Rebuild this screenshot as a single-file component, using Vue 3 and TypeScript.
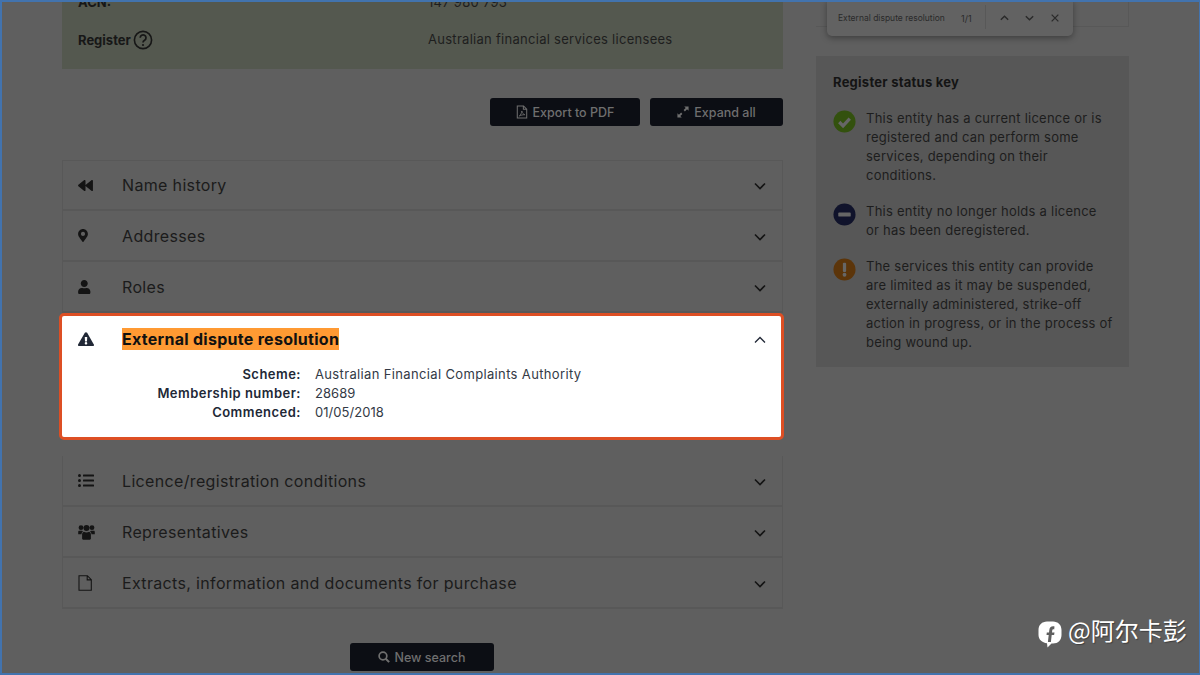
<script setup lang="ts">
interface Row { title: string; icon: string; vb: string; cls: string; line?: boolean }
const P = {
  back: 'M11.5 280.6l192 160c20.6 17.2 52.5 2.8 52.5-24.6V96c0-27.4-31.9-41.8-52.5-24.6l-192 160c-15.3 12.8-15.3 36.4 0 49.2zm256 0l192 160c20.6 17.2 52.5 2.8 52.5-24.6V96c0-27.4-31.9-41.8-52.5-24.6l-192 160c-15.3 12.8-15.3 36.4 0 49.2z',
  pin: 'M172.268 501.67C26.97 291.031 0 268.413 0 192 0 85.961 85.961 0 192 0s192 85.961 192 192c0 76.413-26.97 99.031-172.268 309.67-9.535 13.774-29.93 13.773-39.464 0zM192 272c44.183 0 80-35.817 80-80s-35.817-80-80-80-80 35.817-80 80 35.817 80 80 80z',
  user: 'M224 256c70.7 0 128-57.3 128-128S294.7 0 224 0 96 57.3 96 128s57.3 128 128 128zm89.6 32h-16.7c-22.2 10.2-46.9 16-72.9 16s-50.6-5.8-72.9-16h-16.7C60.2 288 0 348.2 0 422.4V464c0 26.5 21.5 48 48 48h352c26.5 0 48-21.5 48-48v-41.6c0-74.2-60.2-134.4-134.4-134.4z',
  warn: 'M569.517 440.013C587.975 472.007 564.806 512 527.94 512H48.054c-36.937 0-59.999-40.055-41.577-71.987L246.423 24.035c18.467-32.009 64.72-31.951 83.154 0l239.94 416.966zM288 354c-25.405 0-46 20.595-46 46s20.595 46 46 46 46-20.595 46-46-20.595-46-46-46zm-43.673-165.346l7.418 136c.347 6.364 5.609 11.346 11.982 11.346h48.546c6.373 0 11.635-4.982 11.982-11.346l7.418-136c.375-6.874-5.098-12.654-11.982-12.654h-63.383c-6.884 0-12.356 5.78-11.981 12.654z',
  list: 'M48 48a48 48 0 1 0 48 48 48 48 0 0 0-48-48zm0 160a48 48 0 1 0 48 48 48 48 0 0 0-48-48zm0 160a48 48 0 1 0 48 48 48 48 0 0 0-48-48zm448 16H176a16 16 0 0 0-16 16v32a16 16 0 0 0 16 16h320a16 16 0 0 0 16-16v-32a16 16 0 0 0-16-16zm0-320H176a16 16 0 0 0-16 16v32a16 16 0 0 0 16 16h320a16 16 0 0 0 16-16V80a16 16 0 0 0-16-16zm0 160H176a16 16 0 0 0-16 16v32a16 16 0 0 0 16 16h320a16 16 0 0 0 16-16v-32a16 16 0 0 0-16-16z',
  users: 'M3 1.300a2.400 2.400 0 1 0 0 4.800 2.400 2.400 0 0 0 0-4.800zM14 1.300a2.400 2.400 0 1 0 0 4.800 2.400 2.400 0 0 0 0-4.800zM8.500 1a3 3 0 1 0 0 6 3 3 0 0 0 0-6zM1.300 6.800h2.600c.5 0 .9.200 1.200.5C4.200 7.900 3.600 9 3.500 10.300H0.200V8c0-.7.500-1.200 1.100-1.200zM13.100 6.800h2.600c.6 0 1.100.5 1.100 1.200v2.300h-3.300c-.1-1.300-.7-2.400-1.600-3 .3-.3.700-.5 1.200-.5zM5.800 7.800c.8.500 1.700.7 2.700.7s1.900-.2 2.700-.7c1 .4 1.700 1.400 1.700 2.600v4.200c0 .6-.5 1.100-1.100 1.100H5.200c-.6 0-1.100-.5-1.100-1.100v-4.200c0-1.200.7-2.200 1.700-2.600z',
  file: 'M1 .700h8.400l3.900 4v10.600H1zM9.200 .900v4h3.900',
}
const before: Row[] = [
  { title: 'Name history', icon: P.back, vb: '0 32 512 448', cls: 'i-back' },
  { title: 'Addresses', icon: P.pin, vb: '0 0 384 512', cls: 'i-pin' },
  { title: 'Roles', icon: P.user, vb: '0 0 448 512', cls: 'i-user' },
]
const after: Row[] = [
  { title: 'Licence/registration conditions', icon: P.list, vb: '0 48 512 416', cls: 'i-list' },
  { title: 'Representatives', icon: P.users, vb: '0 0 17 16', cls: 'i-users' },
  { title: 'Extracts, information and documents for purchase', icon: P.file, vb: '0 0 14 16', cls: 'i-file', line: true },
]
const details = [
  { label: 'Scheme:', value: 'Australian Financial Complaints Authority', num: false },
  { label: 'Membership number:', value: '28689', num: true },
  { label: 'Commenced:', value: '01/05/2018', num: true },
]
const key = [
  { kind: 'ok', text: ['This entity has a current licence or is', 'registered and can perform some', 'services, depending on their', 'conditions.'] },
  { kind: 'no', text: ['This entity no longer holds a licence', 'or has been deregistered.'] },
  { kind: 'warn', text: ['The services this entity can provide', 'are limited as it may be suspended,', 'externally administered, strike-off', 'action in progress, or in the process of', 'being wound up.'] },
]
</script>

<template>
  <div class="page">
    <main class="left">
      <section class="card">
        <div class="card-row clipped"><b>ACN:</b><span>147 980 793</span></div>
        <div class="card-row">
          <b class="reg">Register
            <svg class="help" viewBox="0 0 20 20"><circle cx="10" cy="10" r="8.600" fill="none" stroke="#161616" stroke-width="1.600"/><path d="M7.200 7.800a2.900 2.900 0 1 1 4.400 2.500c-1 .6-1.600 1.200-1.600 2.300" fill="none" stroke="#161616" stroke-width="1.700"/><circle cx="10" cy="15" r="1.100" fill="#161616"/></svg>
          </b>
          <span class="reg-val">Australian financial services licensees</span>
        </div>
      </section>

      <div class="tools">
        <button class="btn export">
          <svg viewBox="0 0 14 16" class="bi"><path d="M1.500 1h7.300l3.700 3.700v10.300h-11zM8.600 1.200v3.700h3.700" fill="none" stroke="#6f6f6f" stroke-width="1.200"/><path d="M3.800 12.800c1.600-1.400 2.800-3.600 3-6 .5 2.400 1.700 3.800 3.500 4.400-2.300-.1-4.600.4-6.500 1.600z" fill="none" stroke="#6f6f6f" stroke-width="1"/></svg>
          Export to PDF
        </button>
        <button class="btn expand">
          <svg viewBox="0 0 14 14" class="bi wide"><path d="M8.400 .500h5.100v5.100l-1.800-1.800-2.500 2.500-1.500-1.500 2.500-2.500zM5.600 13.500H.500V8.400l1.800 1.800 2.500-2.500 1.500 1.500-2.500 2.500z" fill="#6f6f6f"/></svg>
          Expand all
        </button>
      </div>

      <div class="accordion">
        <div v-for="r in before" :key="r.title" class="row">
          <span class="icon-slot"><svg :class="r.cls" :viewBox="r.vb"><path fill="#141414" :d="r.icon"/></svg></span>
          <span class="title">{{ r.title }}</span>
          <svg class="chev" viewBox="0 0 12 8"><path d="M1 1.500l5 5 5-5" fill="none" stroke="#141414" stroke-width="1.600"/></svg>
        </div>

        <div class="active">
          <div class="active-head">
            <span class="icon-slot"><svg class="i-warn" viewBox="0 0 576 512"><path fill="#212836" :d="P.warn"/></svg></span>
            <mark class="hit">External dispute resolution</mark>
            <svg class="chev" viewBox="0 0 12 8"><path d="M1 6.500l5-5 5 5" fill="none" stroke="#212836" stroke-width="1.300"/></svg>
          </div>
          <dl class="details">
            <template v-for="d in details" :key="d.label">
              <dt>{{ d.label }}</dt>
              <dd :class="{ num: d.num }">{{ d.value }}</dd>
            </template>
          </dl>
        </div>

        <div v-for="r in after" :key="r.title" class="row">
          <span class="icon-slot">
            <svg :class="r.cls" :viewBox="r.vb">
              <path v-if="r.line" fill="none" stroke="#141414" stroke-width="1.100" :d="r.icon"/>
              <path v-else fill="#141414" :d="r.icon"/>
            </svg>
          </span>
          <span class="title">{{ r.title }}</span>
          <svg class="chev" viewBox="0 0 12 8"><path d="M1 1.500l5 5 5-5" fill="none" stroke="#141414" stroke-width="1.600"/></svg>
        </div>
      </div>

      <div class="bottom">
        <button class="btn search">
          <svg viewBox="0 0 14 14" class="bi wide"><circle cx="5.800" cy="5.800" r="4.500" fill="none" stroke="#6f6f6f" stroke-width="2"/><path d="M9 9l4 4" stroke="#6f6f6f" stroke-width="2.400"/></svg>
          New search
        </button>
      </div>
    </main>

    <aside class="right">
      <div class="stub"></div>
      <section class="panel">
        <h3>Register status key</h3>
        <div v-for="k in key" :key="k.kind" class="key">
          <svg class="ki" viewBox="0 0 24 24">
            <template v-if="k.kind === 'ok'">
              <circle cx="12" cy="12" r="11.500" fill="#33510e"/>
              <path d="M6.500 12.500l4 4 7-7.500" fill="none" stroke="#666" stroke-width="3.400"/>
            </template>
            <template v-else-if="k.kind === 'no'">
              <circle cx="12" cy="12" r="11.500" fill="#10132b"/>
              <rect x="5.500" y="10" width="13" height="4.200" rx="1" fill="#666"/>
            </template>
            <template v-else>
              <circle cx="12" cy="12" r="11.500" fill="#5c350a"/>
              <rect x="10.300" y="5" width="3.400" height="9.500" rx="1" fill="#666"/>
              <circle cx="12" cy="17.500" r="2" fill="#666"/>
            </template>
          </svg>
          <p><span v-for="l in k.text" :key="l" class="line">{{ l }}</span></p>
        </div>
      </section>
    </aside>

    <div class="findbar">
      <span class="q">External dispute resolution</span>
      <span class="count">1/1</span>
      <i class="div"></i>
      <svg viewBox="0 0 12 8" class="fi up"><path d="M2 6l4-4 4 4" fill="none" stroke="#2a2a2a" stroke-width="1.500"/></svg>
      <svg viewBox="0 0 12 8" class="fi down"><path d="M2 2l4 4 4-4" fill="none" stroke="#2a2a2a" stroke-width="1.500"/></svg>
      <svg viewBox="0 0 12 12" class="fi close"><path d="M2 2l8 8M10 2l-8 8" fill="none" stroke="#2a2a2a" stroke-width="1.500"/></svg>
    </div>

    <div class="mark">
      <svg viewBox="0 0 24 27" class="mark-i"><path d="M9 .500h6c5 0 8.500 3.500 8.500 8.500v5c0 5-3.500 8.500-8.500 8.500h-1.500L9.500 26.500 9 22.200C4 21.700.5 18.500.5 14V9C.5 4 4 .5 9 .5z" fill="#fff"/><path d="M16.500 5.500c-3.200-.6-5 .9-5.200 3.700L11 11.500H8.800l-.3 2.500h2.200l-.8 7h3l.8-7h2.400l.4-2.500h-2.500l.2-1.800c.1-1 .8-1.500 2-1.300z" fill="#5f5f5f"/></svg>
      <span>@阿尔卡彭</span>
    </div>
  </div>
</template>

<style>
html, body { margin: 0; background: #5f5f5f; }
</style>

<style scoped>
.page {
  position: relative;
  width: 1200px;
  height: 675px;
  overflow: hidden;
  box-sizing: border-box;
  display: flex;
  padding-left: 62px;
  gap: 33px;
  background: #5f5f5f;
  color: #171717;
  font-family: Inter, "Noto Sans", "Liberation Sans", sans-serif;
}
.page::after {
  content: "";
  position: absolute;
  inset: 0;
  border: solid #4273ae;
  border-width: 2px 1.500px 2px 2px;
  pointer-events: none;
}
.left { width: 721px; flex: none; }
.right { width: 313px; flex: none; }

.card {
  height: 69px;
  background: #54584f;
  box-sizing: border-box;
  padding-left: 16px;
  overflow: hidden;
  font-size: 13px;
}
.card-row { display: flex; align-items: center; height: 20px; margin-top: 18px; }
.card-row.clipped { margin-top: -8px; }
.card-row b { width: 350px; font-weight: 700; display: flex; align-items: center; gap: 2px; }
.card-row span { color: #1e1e1e; letter-spacing: .28px; }
.reg-val { margin-bottom: 3px; }
.help { width: 20px; height: 20px; }

.tools { display: flex; justify-content: flex-end; gap: 10px; margin-top: 29px; }
.btn {
  height: 28px;
  border: 0;
  border-radius: 3px;
  background: #0c0e14;
  color: #6f6f6f;
  font: 500 12.500px Inter, "Noto Sans", sans-serif;
  display: flex;
  align-items: center;
  justify-content: center;
  gap: 5px;
  padding: 0;
}
.btn.export { width: 150px; }
.btn.expand { width: 133px; }
.btn.search { width: 144px; margin-right: 2px; }
.bi { width: 12px; height: 14px; flex: none; }
.bi.wide { width: 12px; height: 12px; }

.accordion { margin-top: 34px; }
.row {
  height: 51px;
  box-sizing: border-box;
  display: flex;
  align-items: center;
  padding: 0 16px 0 15px;
  border: solid #585858;
  border-width: 0 1px 2px 1px;
}
.accordion > .row:first-child { border-top-width: 1px; }
.icon-slot { width: 44px; flex: none; display: flex; align-items: center; }
.i-back { width: 15px; height: 13px; }
.i-pin { width: 10px; height: 13px; }
.i-user { width: 12.500px; height: 14px; }
.i-list { width: 16px; height: 13px; }
.i-users { width: 17px; height: 16px; }
.i-file { width: 14px; height: 16px; }
.i-warn { width: 16px; height: 14.500px; }
.title { flex: 1; font-size: 16px; letter-spacing: .34px; color: #1b1b1b; }
.chev { width: 12px; height: 8px; flex: none; position: relative; top: 1px; }

.active {
  margin: 0 -1px 16px -3px;
  height: 127px;
  box-sizing: border-box;
  background: #fff;
  border: 3px solid #dd4f24;
  border-radius: 5px;
  padding: 0 15px 0 16px;
  color: #212836;
}
.active-head { display: flex; align-items: center; height: 46px; }
.hit {
  background: #ff9a33;
  color: #111;
  font-size: 16px;
  font-weight: 700;
  line-height: 22px;
  letter-spacing: .28px;
  margin-right: auto;
}
.details {
  margin: 3px 0 0 -16px;
  display: grid;
  grid-template-columns: 239px 1fr;
  column-gap: 14px;
  font-size: 13px;
  line-height: 19px;
}
.details dt { text-align: right; font-weight: 600; margin: 0; letter-spacing: .48px; white-space: nowrap; }
.details dd { margin: 0; color: #333a46; letter-spacing: .35px; }
.details dd.num { letter-spacing: .05px; }

.bottom { display: flex; justify-content: center; margin-top: 34px; }

.stub {
  height: 27px;
  box-sizing: border-box;
  border: solid #585858;
  border-width: 0 1px 1px 0;
}
.panel {
  margin-top: 29px;
  height: 311px;
  box-sizing: border-box;
  background: #575757;
  padding: 17px 16px 0 17px;
}
.panel h3 { margin: 0 0 17px; font-size: 13px; line-height: 19px; font-weight: 700; letter-spacing: .25px; color: #141414; }
.key { display: flex; gap: 10px; margin-bottom: 17px; }
.ki { width: 23px; height: 23px; flex: none; margin-top: 1px; }
.key p { margin: 0; font-size: 13px; line-height: 19px; letter-spacing: .24px; color: #1d1d1d; }
.line { display: block; white-space: nowrap; }

.findbar {
  position: absolute;
  left: 827px;
  top: 0;
  width: 246px;
  height: 36px;
  box-sizing: border-box;
  background: #626262;
  border-radius: 0 0 5px 5px;
  box-shadow: 0 2px 6px rgba(0, 0, 0, .35);
  font-size: 8.500px;
  color: #2a2a2a;
}
.findbar .q, .findbar .count { position: absolute; top: 13px; line-height: 11px; white-space: nowrap; }
.q { left: 11px; }
.count { left: 134px; font-size: 9px; }
.div { position: absolute; left: 158px; top: 5px; width: 1px; height: 24px; background: #585858; }
.fi { position: absolute; width: 11px; height: 8px; top: 14px; }
.fi.up { left: 172px; }
.fi.down { left: 197px; }
.fi.close { left: 223px; width: 10px; height: 10px; top: 13px; }

.mark {
  position: absolute;
  left: 1038px;
  top: 616px;
  display: flex;
  align-items: flex-start;
  gap: 6px;
  color: #fff;
  font: 24px "Noto Sans CJK SC", sans-serif;
  line-height: 28px;
  white-space: nowrap;
  text-shadow: 1px 1px 1px rgba(0, 0, 0, .35);
}
.mark-i { width: 24px; height: 27px; margin-top: 5px; }
</style>
